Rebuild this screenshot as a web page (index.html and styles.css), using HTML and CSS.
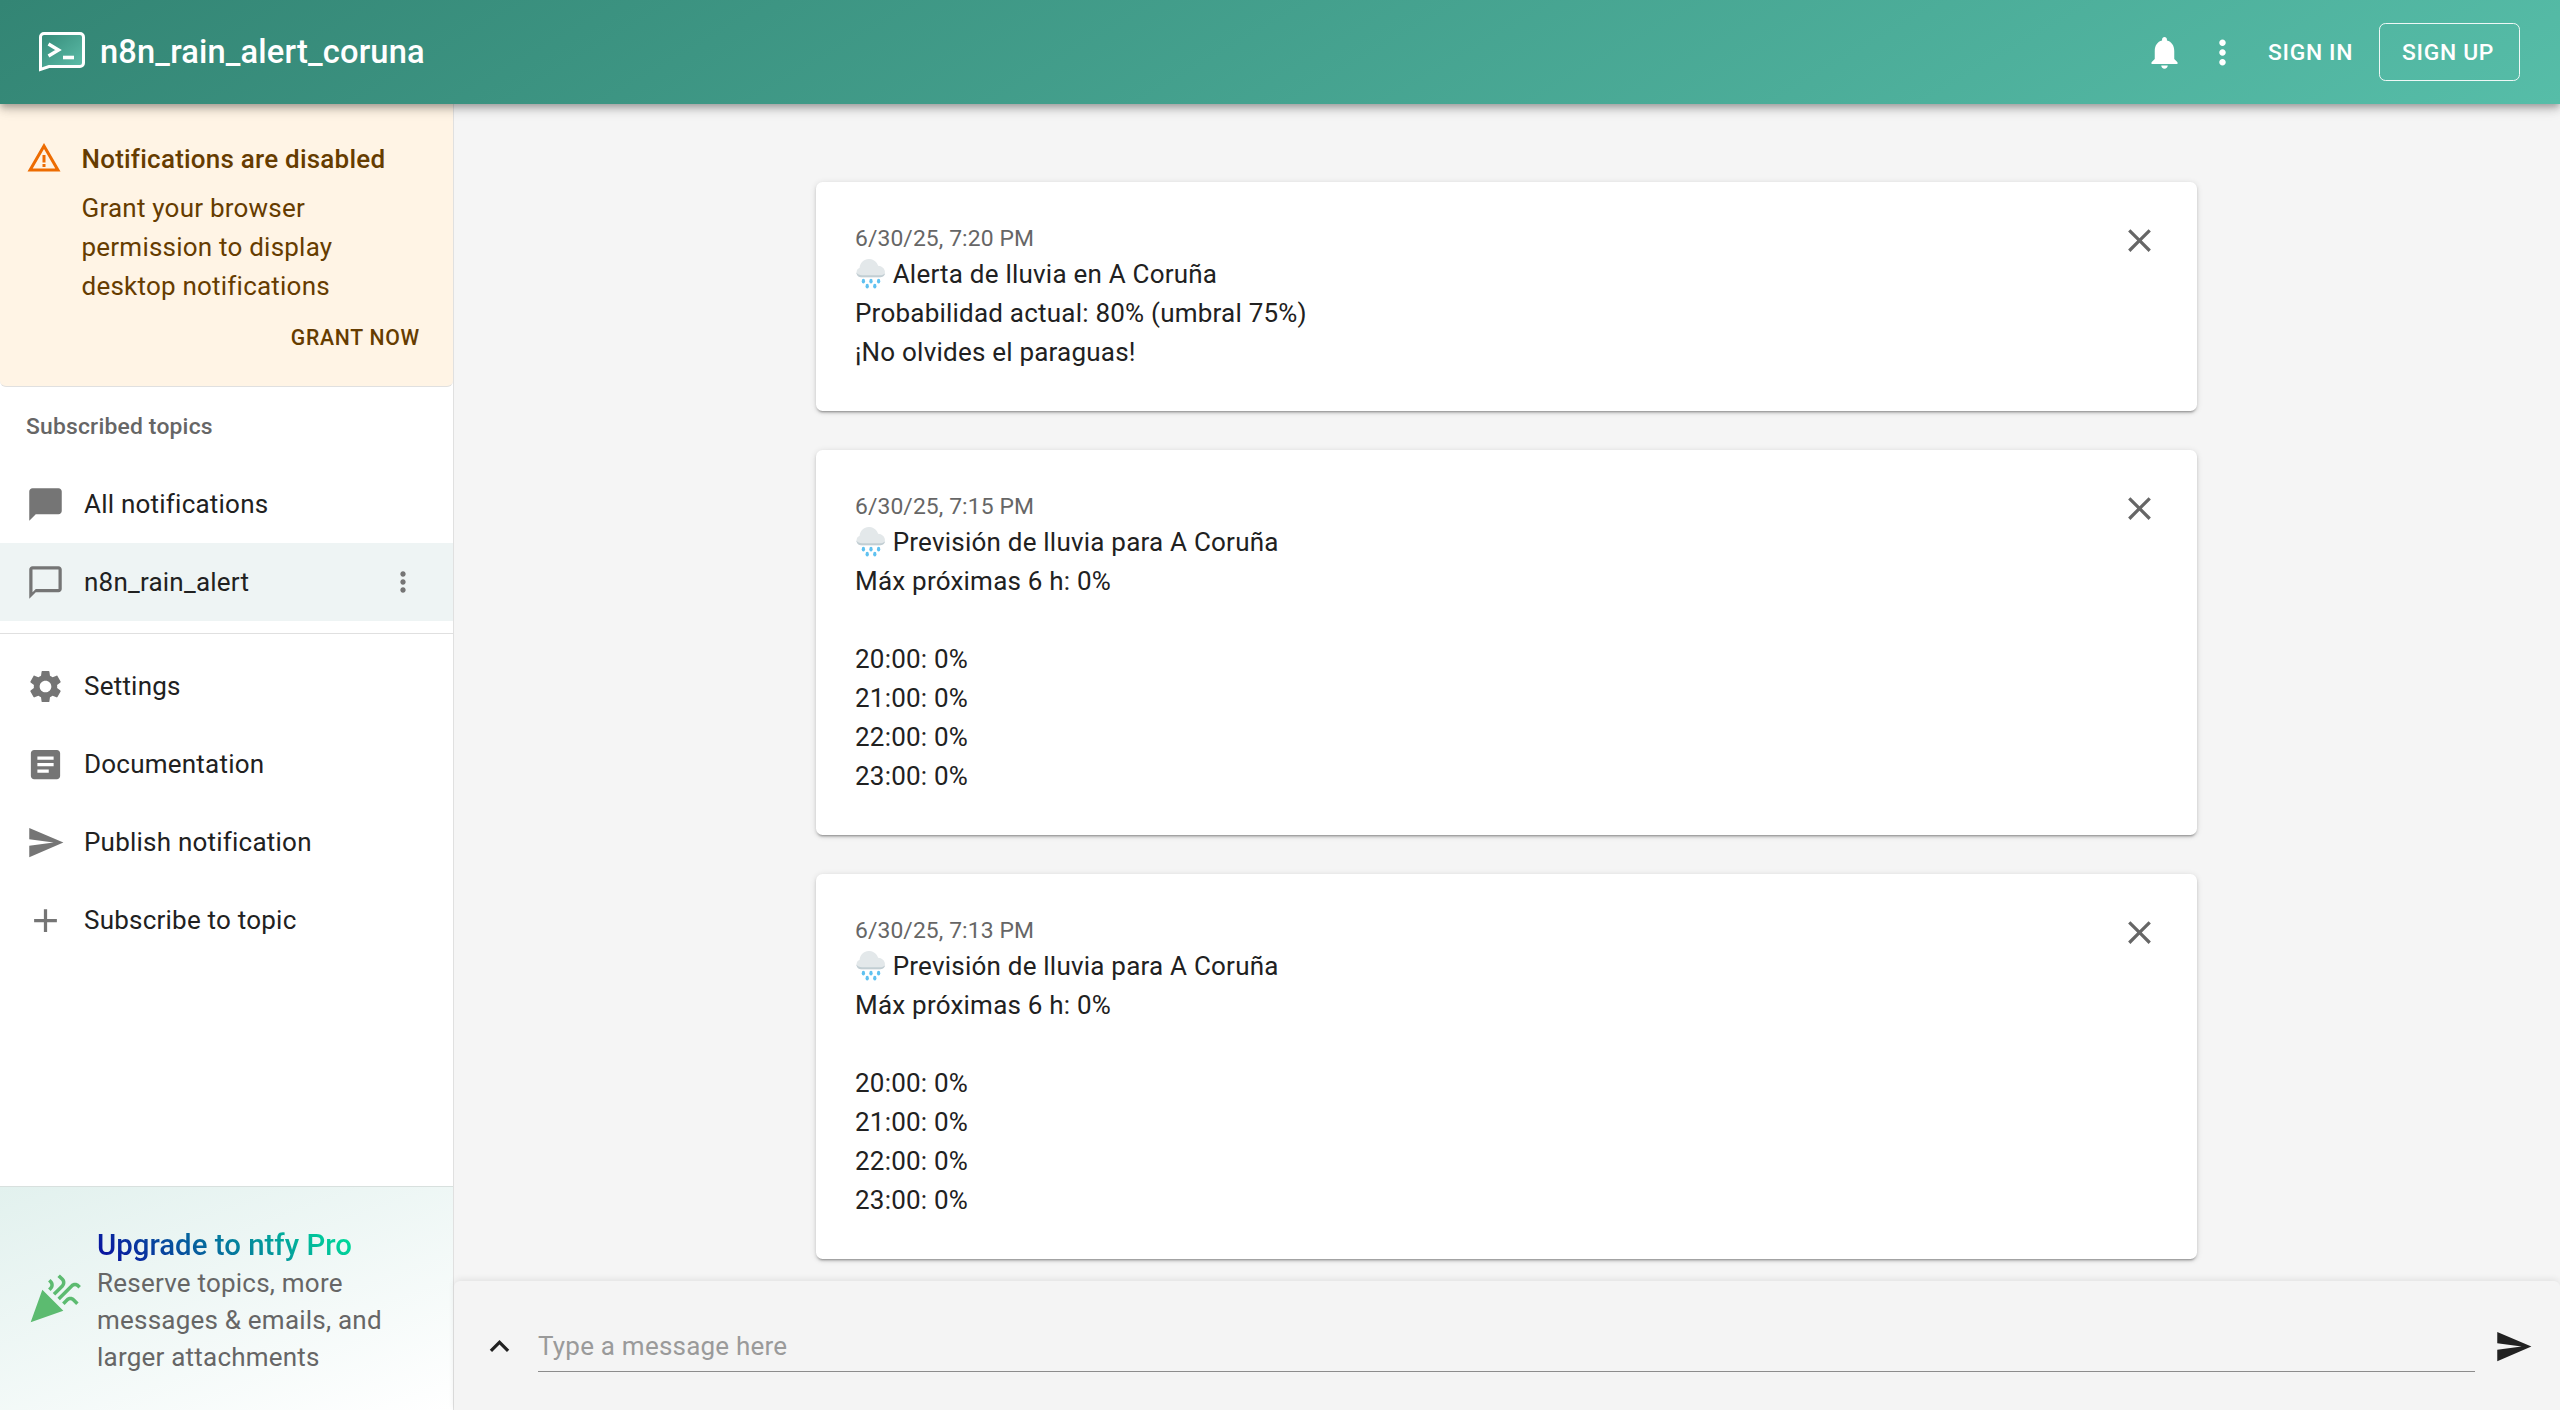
FILE: index.html
```html
<!DOCTYPE html>
<html lang="en">
<head>
<meta charset="utf-8">
<title>n8n_rain_alert_coruna</title>
<link rel="stylesheet" href="styles.css">
</head>
<body>
<header class="topbar">
  <svg class="logo" viewBox="0 0 46 40"><defs><linearGradient id="logofill" x1="0" y1="0" x2="1" y2="1"><stop offset="0" stop-color="#348a78"/><stop offset="1" stop-color="#5fbfab"/></linearGradient></defs><path d="M5 1.500h36a3.500 3.500 0 0 1 3.500 3.500v26a3.500 3.500 0 0 1-3.500 3.500H10L1.500 37.500V5A3.500 3.500 0 0 1 5 1.500z" fill="url(#logofill)" stroke="#fff" stroke-width="3"/><path d="M9.500 12l10 6-10 6" fill="none" stroke="#fff" stroke-width="3.400"/><path d="M24 25.500h11" stroke="#fff" stroke-width="3.600"/></svg>
  <h1 class="title">n8n_rain_alert_coruna</h1>
  <div class="top-actions">
    <svg class="icon icon-white" viewBox="0 0 24 24"><path d="M12 22c1.1 0 2-.9 2-2h-4c0 1.1.89 2 2 2zm6-6v-5c0-3.07-1.64-5.64-4.5-6.32V4c0-.83-.67-1.5-1.5-1.5s-1.5.67-1.5 1.5v.68C7.63 5.36 6 7.92 6 11v5l-2 2v1h16v-1l-2-2z"/></svg>
    <svg class="icon icon-white" viewBox="0 0 24 24"><path d="M12 8c1.1 0 2-.9 2-2s-.9-2-2-2-2 .9-2 2 .9 2 2 2zm0 2c-1.1 0-2 .9-2 2s.9 2 2 2 2-.9 2-2-.9-2-2-2zm0 6c-1.1 0-2 .9-2 2s.9 2 2 2 2-.9 2-2-.9-2-2-2z"/></svg>
    <span class="sign-in">SIGN IN</span>
    <span class="sign-up">SIGN UP</span>
  </div>
</header>
<div class="shell">
  <aside class="sidebar">
    <section class="alert">
      <svg class="alert-icon" viewBox="0 0 24 24"><path d="M12 5.99 19.53 19H4.47L12 5.99M12 2 1 21h22L12 2zm1 14h-2v2h2v-2zm0-6h-2v5h2v-5z"/></svg>
      <div class="alert-body">
        <div class="alert-title">Notifications are disabled</div>
        <p class="alert-text">Grant your browser permission to display desktop notifications</p>
        <div class="alert-action">GRANT NOW</div>
      </div>
    </section>
    <div class="subheader">Subscribed topics</div>
    <nav>
      <div class="row">
        <svg class="icon icon-grey" viewBox="0 0 24 24"><path d="M20 2H4c-1.1 0-2 .9-2 2v18l4-4h14c1.1 0 2-.9 2-2V4c0-1.1-.9-2-2-2z"/></svg>
        <span class="row-text">All notifications</span>
      </div>
      <div class="row row-selected">
        <svg class="icon icon-grey" viewBox="0 0 24 24"><path d="M20 2H4c-1.1 0-2 .9-2 2v18l4-4h14c1.1 0 2-.9 2-2V4c0-1.1-.9-2-2-2zm0 14H6l-2 2V4h16v12z"/></svg>
        <span class="row-text row-label">n8n_rain_alert</span>
        <svg class="icon-small icon-grey" viewBox="0 0 24 24"><path d="M12 8c1.1 0 2-.9 2-2s-.9-2-2-2-2 .9-2 2 .9 2 2 2zm0 2c-1.1 0-2 .9-2 2s.9 2 2 2 2-.9 2-2-.9-2-2-2zm0 6c-1.1 0-2 .9-2 2s.9 2 2 2 2-.9 2-2-.9-2-2-2z"/></svg>
      </div>
    </nav>
    <hr class="divider">
    <nav>
      <div class="row">
        <svg class="icon icon-grey" viewBox="0 0 24 24"><path d="M19.14 12.94c.04-.3.06-.61.06-.94 0-.32-.02-.64-.07-.94l2.03-1.58c.18-.14.23-.41.12-.61l-1.92-3.32c-.12-.22-.37-.29-.59-.22l-2.39.96c-.5-.38-1.03-.7-1.62-.94l-.36-2.54c-.04-.24-.24-.41-.48-.41h-3.84c-.24 0-.43.17-.47.41l-.36 2.54c-.59.24-1.13.57-1.62.94l-2.39-.96c-.22-.08-.47 0-.59.22L2.74 8.87c-.12.21-.08.47.12.61l2.03 1.58c-.05.3-.09.63-.09.94s.02.64.07.94l-2.03 1.58c-.18.14-.23.41-.12.61l1.92 3.32c.12.22.37.29.59.22l2.39-.96c.5.38 1.03.7 1.62.94l.36 2.54c.05.24.24.41.48.41h3.84c.24 0 .44-.17.47-.41l.36-2.54c.59-.24 1.13-.56 1.62-.94l2.39.96c.22.08.47 0 .59-.22l1.92-3.32c.12-.22.07-.47-.12-.61l-2.01-1.58zM12 15.6c-1.98 0-3.6-1.62-3.6-3.6s1.62-3.6 3.6-3.6 3.6 1.62 3.6 3.6-1.62 3.6-3.6 3.6z"/></svg>
        <span class="row-text">Settings</span>
      </div>
      <div class="row">
        <svg class="icon icon-grey" viewBox="0 0 24 24"><path d="M19 3H5c-1.1 0-2 .9-2 2v14c0 1.1.9 2 2 2h14c1.1 0 2-.9 2-2V5c0-1.1-.9-2-2-2zm-5 14H7v-2h7v2zm3-4H7v-2h10v2zm0-4H7V7h10v2z"/></svg>
        <span class="row-text">Documentation</span>
      </div>
      <div class="row">
        <svg class="icon icon-grey" viewBox="0 0 24 24"><path d="M2.01 21 23 12 2.01 3 2 10l15 2-15 2z"/></svg>
        <span class="row-text">Publish notification</span>
      </div>
      <div class="row">
        <svg class="icon icon-grey" viewBox="0 0 24 24"><path d="M19 13h-6v6h-2v-6H5v-2h6V5h2v6h6v2z"/></svg>
        <span class="row-text">Subscribe to topic</span>
      </div>
    </nav>
    <section class="upgrade">
      <svg class="upgrade-icon" viewBox="0 0 24 24"><path d="m2 22 14-5-9-9zm12.53-9.47 5.59-5.59c.49-.49 1.28-.49 1.77 0l.59.59 1.06-1.06-.59-.59c-1.07-1.07-2.82-1.07-3.89 0l-5.59 5.59 1.06 1.06zm-4.47-5.65-.59.59 1.06 1.06.59-.59c1.07-1.07 1.07-2.82 0-3.89l-.59-.59-1.06 1.07.59.59c.48.48.48 1.28 0 1.76zm7 5-1.59 1.59 1.06 1.06 1.59-1.59c.49-.49 1.28-.49 1.77 0l1.61 1.61 1.06-1.06-1.61-1.61c-1.08-1.07-2.82-1.07-3.89 0zm-2-6-3.59 3.59 1.06 1.06 3.59-3.59c1.07-1.07 1.07-2.82 0-3.89l-1.59-1.59-1.06 1.06 1.59 1.59c.48.49.48 1.29 0 1.77z"/></svg>
      <div>
        <div class="upgrade-title"><span>Upgrade to ntfy Pro</span></div>
        <p class="upgrade-text">Reserve topics, more messages &amp; emails, and larger attachments</p>
      </div>
    </section>
  </aside>
  <main class="main">
    <div class="feed">
      <article class="card">
        <div class="card-content">
          <div class="date">6/30/25, 7:20 PM</div>
          <div class="line"><svg class="emoji" viewBox="0 0 30 30"><use href="#rain"/></svg> Alerta de lluvia en A Coruña</div>
          <div class="line">Probabilidad actual: 80% (umbral 75%)</div>
          <div class="line">¡No olvides el paraguas!</div>
        </div>
        <svg class="icon icon-close" viewBox="0 0 24 24"><path d="M19 6.41 17.59 5 12 10.59 6.41 5 5 6.41 10.59 12 5 17.59 6.41 19 12 13.41 17.59 19 19 17.59 13.41 12z"/></svg>
      </article>
      <article class="card">
        <div class="card-content">
          <div class="date">6/30/25, 7:15 PM</div>
          <div class="line"><svg class="emoji" viewBox="0 0 30 30"><use href="#rain"/></svg> Previsión de lluvia para A Coruña</div>
          <div class="line">Máx próximas 6 h: 0%</div>
          <div class="line">&nbsp;</div>
          <div class="line">20:00: 0%</div>
          <div class="line">21:00: 0%</div>
          <div class="line">22:00: 0%</div>
          <div class="line">23:00: 0%</div>
        </div>
        <svg class="icon icon-close" viewBox="0 0 24 24"><path d="M19 6.41 17.59 5 12 10.59 6.41 5 5 6.41 10.59 12 5 17.59 6.41 19 12 13.41 17.59 19 19 17.59 13.41 12z"/></svg>
      </article>
      <article class="card">
        <div class="card-content">
          <div class="date">6/30/25, 7:13 PM</div>
          <div class="line"><svg class="emoji" viewBox="0 0 30 30"><use href="#rain"/></svg> Previsión de lluvia para A Coruña</div>
          <div class="line">Máx próximas 6 h: 0%</div>
          <div class="line">&nbsp;</div>
          <div class="line">20:00: 0%</div>
          <div class="line">21:00: 0%</div>
          <div class="line">22:00: 0%</div>
          <div class="line">23:00: 0%</div>
        </div>
        <svg class="icon icon-close" viewBox="0 0 24 24"><path d="M19 6.41 17.59 5 12 10.59 6.41 5 5 6.41 10.59 12 5 17.59 6.41 19 12 13.41 17.59 19 19 17.59 13.41 12z"/></svg>
      </article>
    </div>
    <footer class="composer">
      <svg class="icon icon-dark" viewBox="0 0 24 24"><path d="M7.41 15.41 12 10.83l4.59 4.58L18 14l-6-6-6 6z"/></svg>
      <div class="composer-input">Type a message here</div>
      <svg class="icon icon-dark" viewBox="0 0 24 24"><path d="M2.01 21 23 12 2.01 3 2 10l15 2-15 2z"/></svg>
    </footer>
  </main>
</div>
<svg class="defs" aria-hidden="true"><defs><g id="rain">
  <path d="M7 20a4 4 0 0 1-1-7.600C6.400 8 10 5 14 5.500c3.400.400 5.800 2.500 6.600 5.300 3 .100 5.400 2.300 5.400 5 0 2.400-2 4.200-4.600 4.200z" fill="#e3e8ea"/>
  <path d="M3.200 16c.5 2.400 2 4 4 4h15c2 0 3.600-1.400 4-3.300-1 1-2.400 1.600-4 1.600H8c-2 0-3.800-.8-4.800-2.300z" fill="#c2ced3"/>
  <g fill="#5fc1f0"><ellipse cx="9" cy="23" rx="1.300" ry="1.900"/><ellipse cx="15" cy="23" rx="1.300" ry="1.900"/><ellipse cx="21" cy="23" rx="1.300" ry="1.900"/><ellipse cx="12" cy="27" rx="1.300" ry="1.900"/><ellipse cx="18" cy="27" rx="1.300" ry="1.900"/></g>
</g></defs></svg>
</body>
</html>
```

FILE: styles.css
```css
* { box-sizing: border-box; }
html, body { height: 100%; }
body {
  margin: 0;
  height: 1410px;
  overflow: hidden;
  display: flex;
  flex-direction: column;
  background: #f5f5f5;
  color: #212121;
  font-family: Roboto, "Liberation Sans", sans-serif;
  font-size: 26px;
  line-height: 39px;
  letter-spacing: .22px;
}
.defs { width: 0; height: 0; display: block; }
.icon { width: 39px; height: 39px; flex: none; display: block; }
.icon-white { fill: #fff; }
.icon-grey { fill: #757575; }
.icon-dark { fill: #212121; }
.icon-close { fill: #666; margin-right: -1px; }
.icon-small { width: 32px; height: 32px; flex: none; margin-right: 8px; }

.topbar {
  position: relative;
  z-index: 2;
  flex: none;
  height: 104px;
  display: flex;
  align-items: center;
  padding: 0 40px 0 39px;
  color: #fff;
  background: linear-gradient(150deg, #338574 0%, #56bda8 100%);
  box-shadow: 0 3px 6px -1px rgba(0,0,0,.2), 0 6px 8px 0 rgba(0,0,0,.14), 0 2px 16px 0 rgba(0,0,0,.12);
}
.logo { width: 46px; height: 40px; flex: none; }
.title { margin: 0 0 0 15px; font-size: 32.650px; font-weight: 500; line-height: 1.6; letter-spacing: .16px; }
.top-actions { margin-left: auto; display: flex; align-items: center; font-size: 22.860px; font-weight: 500; letter-spacing: .65px; }
.top-actions .icon + .icon { margin-left: 19px; }
.sign-in { margin: 0 26px 0 26px; }
.sign-up { padding: 9px 25px 8px 22px; border: 1.600px solid rgba(255,255,255,.9); border-radius: 6.500px; }

.shell { flex: 1; min-height: 0; display: flex; }
.sidebar {
  flex: none;
  width: 454px;
  display: flex;
  flex-direction: column;
  background: #fff;
  border-right: 1.600px solid #e0e0e0;
}
.alert {
  flex: none;
  height: 283px;
  display: flex;
  padding: 36px 33px 0 26px;
  background: #fff4e5;
  color: #663c00;
  border-bottom: 1.600px solid #e0e0e0;
  border-radius: 0 0 6px 6px;
}
.alert-icon { width: 36px; height: 36px; flex: none; fill: #ed6c02; }
.alert-body { flex: 1; margin-left: 19.500px; }
.alert-title { font-weight: 500; }
.alert-text { margin: 9.500px 0 0; }
.alert-action { margin-top: 12px; text-align: right; font-size: 21.200px; font-weight: 500; letter-spacing: .75px; }

.subheader { flex: none; height: 78px; padding-left: 26px; font-size: 22.860px; font-weight: 500; line-height: 80px; letter-spacing: .2px; color: #666; }
.row { height: 78px; display: flex; align-items: center; gap: 19px; padding: 0 26px; }
.row-text { padding-top: 1px; }
.row-selected { background: #eef4f4; }
.row-label { flex: 1; }
.divider { margin: 12px 0 13px; border: 0; border-top: 1.600px solid #e0e0e0; }

.upgrade {
  margin-top: auto;
  flex: none;
  height: 224px;
  display: flex;
  align-items: center;
  gap: 15px;
  padding: 4px 20px 0 26px;
  border-top: 1.600px solid #d8e0de;
  background: linear-gradient(160deg, #e2f1ee 0%, #ffffff 100%);
}
.upgrade-icon { width: 56px; height: 56px; flex: none; margin-top: -4px; fill: #5cbb70; }
.upgrade-title { font-size: 29.400px; font-weight: 500; line-height: 39px; letter-spacing: 0; }
.upgrade-title span { background: linear-gradient(45deg, #0a0aa0, #00e59a); -webkit-background-clip: text; background-clip: text; color: transparent; }
.upgrade-text { margin: 0; line-height: 37px; color: #666; }

.main { flex: 1; min-width: 0; display: flex; flex-direction: column; }
.feed { flex: 1; min-height: 0; overflow: hidden; padding: 78px 2px 0 0; display: flex; flex-direction: column; align-items: center; gap: 39px; }
.card {
  flex: none;
  width: 1381px;
  display: flex;
  justify-content: space-between;
  align-items: flex-start;
  padding: 39px 39px 39px 39.500px;
  background: #fff;
  border-radius: 6.500px;
  box-shadow: 0 3px 2px -2px rgba(0,0,0,.25), 0 2px 3px 0 rgba(0,0,0,.14), 0 1px 6px 0 rgba(0,0,0,.12);
}
.date { height: 34px; font-size: 22.860px; line-height: 36px; letter-spacing: .1px; color: #666; }
.line { height: 39px; }
.emoji { width: 38px; height: 38px; vertical-align: -7px; margin: -6px -4px 0 -3px; }

.composer {
  position: relative;
  flex: none;
  height: 129px;
  display: flex;
  align-items: center;
  padding: 2px 27px 0 26px;
  background: #f4f4f4;
  border-radius: 6px 6px 0 0;
  box-shadow: 0 -2px 6px rgba(0,0,0,.08);
}
.composer-input { flex: 1; margin: 0 19px 0 19px; height: 50px; line-height: 48px; color: #9a9a9a; border-bottom: 1.600px solid #8c8c8c; }
```
